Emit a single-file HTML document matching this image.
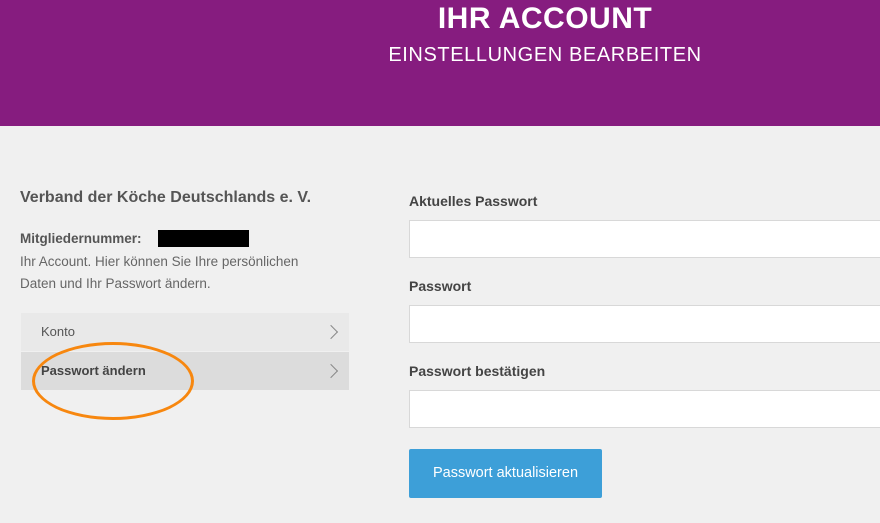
<!DOCTYPE html>
<html><head><meta charset="utf-8"><style>
body{margin:0;width:880px;height:523px;overflow:hidden;background:#f0f0f0;font-family:"Liberation Sans",sans-serif;position:relative}
.hd{position:absolute;left:0;top:0;width:880px;height:126px;background:#861c7f;color:#fff;text-align:center}
.t1{position:absolute;left:0;width:1090px;top:2px;font-size:30px;font-weight:bold;letter-spacing:0.5px}
.t2{position:absolute;left:0;width:1090px;top:44px;font-size:20px;letter-spacing:0.6px}
.a{position:absolute;color:#555}
.row{position:absolute;left:21px;width:328px;height:38px;font-size:13px;color:#555}
.row span{position:absolute;left:20px;top:11px}
.chev{position:absolute;right:13px;top:14px;width:9px;height:9px;border-right:1.5px solid #888;border-top:1.5px solid #888;transform:rotate(45deg)}
.lbl{position:absolute;left:409px;font-size:14px;font-weight:bold;color:#444}
.inp{position:absolute;left:409px;width:480px;height:36px;background:#fff;border:1px solid #d8d8d8}
</style></head><body>
<div class="hd"><div class="t1">IHR ACCOUNT</div><div class="t2">EINSTELLUNGEN BEARBEITEN</div></div>
<div class="a" style="left:20px;top:189px;font-size:16px;font-weight:bold">Verband der Köche Deutschlands e. V.</div>
<div class="a" style="left:20px;top:231px;font-size:13.5px;font-weight:bold">Mitgliedernummer:</div>
<div style="position:absolute;left:158px;top:230px;width:91px;height:17px;background:#000"></div>
<div class="a" style="left:20px;top:251px;font-size:13.5px;line-height:22px;color:#666">Ihr Account. Hier können Sie Ihre persönlichen<br>Daten und Ihr Passwort ändern.</div>
<div class="row" style="top:313px;background:#e9e9e9"><span>Konto</span><div class="chev"></div></div>
<div class="row" style="top:352px;background:#dcdcdc"><span style="font-weight:bold;color:#444">Passwort ändern</span><div class="chev"></div></div>
<div style="position:absolute;left:32px;top:342px;width:156px;height:72px;border:3px solid #f7870f;border-radius:50%"></div>
<div class="lbl" style="top:193px">Aktuelles Passwort</div>
<div class="inp" style="top:220px"></div>
<div class="lbl" style="top:278px">Passwort</div>
<div class="inp" style="top:305px"></div>
<div class="lbl" style="top:363px">Passwort bestätigen</div>
<div class="inp" style="top:390px"></div>
<div style="position:absolute;left:409px;top:449px;width:193px;height:49px;background:#3d9fd8;color:#fff;font-size:14.5px;text-align:center;line-height:49px;border-radius:2px">Passwort aktualisieren</div>
</body></html>
